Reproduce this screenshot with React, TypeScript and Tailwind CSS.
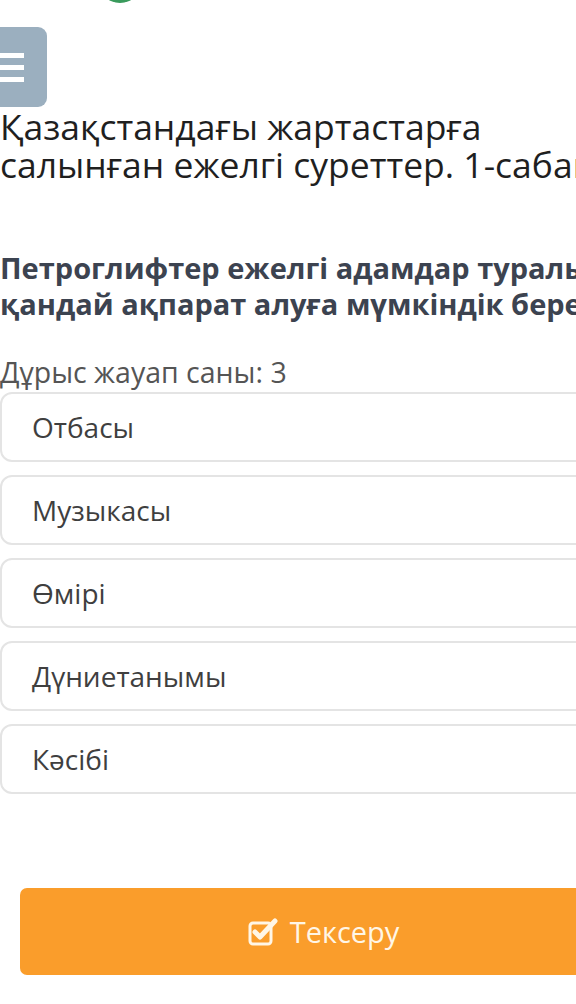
import React from "react";

const options = ["Отбасы", "Музыкасы", "Өмірі", "Дүниетанымы", "Кәсібі"];

export default function App() {
  return (
    <div
      className="w-[576px] h-[1004px] overflow-hidden bg-white"
      style={{ fontFamily: '"Open Sans", "Noto Sans", sans-serif' }}
    >
      <div className="w-[647px]">
        <div className="h-[27px] overflow-hidden">
          <div className="ml-[98px] mt-[-41px] w-[44px] h-[44px] rounded-full bg-[#3a9a5c]" />
        </div>
        <div className="w-[47px] h-[80px] rounded-r-[9px] bg-[#9bafbf] flex flex-col justify-center gap-[7px]">
          <div className="w-[24px] h-[5px] bg-white" />
          <div className="w-[24px] h-[5px] bg-white" />
          <div className="w-[24px] h-[5px] bg-white" />
        </div>
        <h1 className="text-[35.5px] leading-[38px] text-[#1f1f1f] font-normal whitespace-nowrap">
          <div>Қазақстандағы жартастарға</div>
          <div>салынған ежелгі суреттер. 1-сабақ</div>
        </h1>
        <div className="mt-[67px] text-[29px] leading-[36px] font-bold text-[#3c4350] whitespace-nowrap">
          <div>Петроглифтер ежелгі адамдар туралы</div>
          <div>қандай ақпарат алуға мүмкіндік береді?</div>
        </div>
        <div className="mt-[32px] text-[28.5px] leading-[36px] text-[#555555] whitespace-nowrap">
          Дұрыс жауап саны: 3
        </div>
        <div className="mt-[2px] flex flex-col gap-[13px]">
          {options.map((o) => (
            <div
              key={o}
              className="h-[70px] border-2 border-[#e4e4e4] rounded-[12px] flex items-center pl-[30px] text-[28px] text-[#3f3f3f]"
            >
              {o}
            </div>
          ))}
        </div>
        <div className="px-[20px] mt-[94px]">
          <div className="h-[87px] rounded-[7px] bg-[#fa9d2b] flex items-center justify-center gap-[12px] text-[29px] text-[#fff6e6]">
            <svg width="30" height="28" viewBox="0 0 30 28" fill="none">
              <rect x="2" y="5" width="21" height="21" rx="3" stroke="#fff6e6" strokeWidth="3" />
              <path d="M7 14 L12 19 L27 3" stroke="#fff6e6" strokeWidth="5" strokeLinecap="round" strokeLinejoin="round" />
            </svg>
            <span>Тексеру</span>
          </div>
        </div>
      </div>
    </div>
  );
}
